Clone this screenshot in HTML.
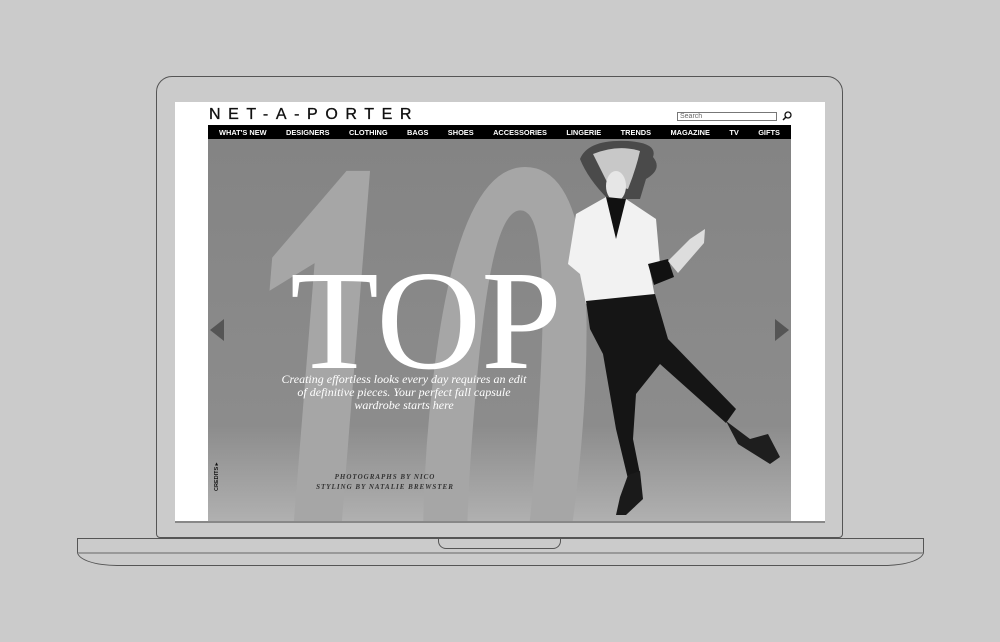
<!DOCTYPE html>
<html><head><meta charset="utf-8"><style>
html,body{margin:0;padding:0;background:#cbcbcb;width:1000px;height:642px;overflow:hidden;position:relative;font-family:"Liberation Sans",sans-serif}
.lid{position:absolute;left:156px;top:76px;width:687px;height:462px;border:1.5px solid #555;border-radius:16px 16px 4px 4px;box-sizing:border-box}
.screen{position:absolute;left:175px;top:102px;width:650px;height:419px;background:#fff;border-bottom:2px solid #888}
.base{position:absolute;left:77px;top:538px;width:847px;height:28px;border:1.5px solid #555;border-radius:0 0 40px 40px/0 0 14px 14px;box-sizing:border-box}
.base:before{content:"";position:absolute;left:0;right:0;top:13px;border-top:2px solid #999}
.notch{position:absolute;left:438px;top:538px;width:123px;height:11px;border:1.5px solid #555;border-top:none;border-radius:0 0 8px 8px;box-sizing:border-box}
.logo{position:absolute;left:209px;top:106px;font-size:16px;letter-spacing:7.6px;color:#111;line-height:17px;-webkit-text-stroke:.3px #111;white-space:nowrap}
.search{position:absolute;left:677px;top:112px;width:100px;height:9px;border:1px solid #777;font-size:7px;line-height:8px;color:#666;padding-left:2px;box-sizing:border-box}
.nav{position:absolute;left:208px;top:125px;width:583px;height:14px;background:#000;color:#fff;font-size:7.4px;font-weight:bold;display:flex;justify-content:space-between;align-items:center;padding:0 11px;box-sizing:border-box}
.hero{position:absolute;left:208px;top:139px}
</style></head><body>
<div class="lid"></div>
<div class="screen"></div>
<div class="base"></div>
<div class="notch"></div>
<div class="logo">NET-A-PORTER</div>
<div class="search">Search</div>
<svg style="position:absolute;left:781px;top:110px" width="12" height="12"><circle cx="7" cy="5" r="3" fill="none" stroke="#111" stroke-width="1.3"/><line x1="5" y1="7" x2="2" y2="10" stroke="#111" stroke-width="1.5"/></svg>
<div class="nav"><span>WHAT'S NEW</span><span>DESIGNERS</span><span>CLOTHING</span><span>BAGS</span><span>SHOES</span><span>ACCESSORIES</span><span>LINGERIE</span><span>TRENDS</span><span>MAGAZINE</span><span>TV</span><span>GIFTS</span></div>
<svg class="hero" width="583" height="382" viewBox="0 0 583 382">
<defs><linearGradient id="g" x1="0" y1="0" x2="0" y2="1"><stop offset="0" stop-color="#848484"/><stop offset=".75" stop-color="#8c8c8c"/><stop offset="1" stop-color="#b0b0b0"/></linearGradient></defs>
<rect width="583" height="382" fill="url(#g)"/>
<text x="20" y="560" font-family="Liberation Serif,serif" font-style="italic" font-weight="bold" font-size="800" fill="#a6a6a6" textLength="365" lengthAdjust="spacingAndGlyphs">10</text>
<!-- woman -->
<path d="M372 20 Q380 0 420 2 Q450 4 445 18 Q455 30 438 40 L432 60 L400 60 Q380 40 372 20Z" fill="#4a4a4a"/>
<path d="M385 15 Q410 5 432 12 Q428 30 420 50 L400 45Z" fill="#c8c8c8"/>
<ellipse cx="408" cy="47" rx="10" ry="15" fill="#e6e6e6"/>
<path d="M368 75 L398 58 L418 60 L448 80 L452 125 L442 132 L447 158 L378 165 L372 135 L360 125 Z" fill="#f2f2f2"/>
<path d="M398 58 L418 60 L408 100 Z" fill="#111"/>
<path d="M440 125 L460 120 L466 138 L446 146 Z" fill="#111"/>
<path d="M460 122 L482 100 L497 90 L496 104 L470 134 Z" fill="#ddd"/>
<path d="M378 162 L447 155 L460 200 L528 270 L518 284 L452 225 L428 255 L425 300 L432 335 L420 340 L408 290 L395 215 L382 190 Z" fill="#151515"/>
<path d="M518 282 L542 300 L560 295 L572 318 L562 325 L530 305 Z" fill="#1e1e1e"/>
<path d="M420 336 L432 332 L435 360 L418 376 L408 376 L412 358 Z" fill="#1a1a1a"/>
<text font-family="Liberation Serif,serif" font-size="142" fill="#fff" x="82" y="229" textLength="272" lengthAdjust="spacingAndGlyphs">TOP</text>
<g font-family="Liberation Serif,serif" font-style="italic" font-size="12" fill="#fff" text-anchor="middle">
<text x="196" y="244">Creating effortless looks every day requires an edit</text>
<text x="196" y="257">of definitive pieces. Your perfect fall capsule</text>
<text x="196" y="270">wardrobe starts here</text></g>
<g font-family="Liberation Serif,serif" font-style="italic" font-weight="bold" font-size="7" fill="#333" text-anchor="middle" letter-spacing="1">
<text x="177" y="340">PHOTOGRAPHS BY NICO</text>
<text x="177" y="350">STYLING BY NATALIE BREWSTER</text></g>
<text transform="translate(10,352) rotate(-90)" font-size="5.5" font-weight="bold" fill="#111">CREDITS ▸</text>
<polygon points="2,191 16,180 16,202" fill="#555"/>
<polygon points="581,191 567,180 567,202" fill="#555"/>
</svg>
</body></html>
